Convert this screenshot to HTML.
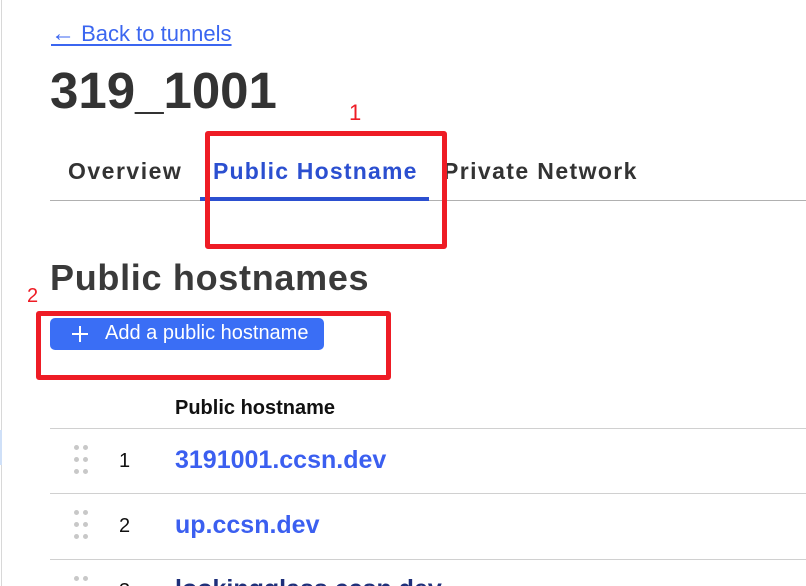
<!DOCTYPE html>
<html><head><meta charset="utf-8"><style>
html,body{margin:0;padding:0;background:#fff;width:806px;height:586px;overflow:hidden;position:relative;font-family:"Liberation Sans",sans-serif;}
.a{position:absolute;white-space:nowrap;}
.line{position:absolute;background:#d0d0d0;height:1px;}
.dots{position:absolute;width:14px;}
.dots i{position:absolute;width:5px;height:5px;border-radius:50%;background:#c8c8c8;}
.red{position:absolute;border:5px solid #ee1c25;border-radius:3px;box-sizing:border-box;}
</style></head><body>
<div style="position:absolute;left:1px;top:0;width:1px;height:586px;background:#d8d8d8"></div>
<div style="position:absolute;left:0;top:430px;width:2px;height:35px;background:#cfe0f8"></div>

<div class="a" style="left:51px;top:20px;font-size:22px;color:#3b66f0;text-decoration:underline;text-underline-offset:3px;"><span style="font-size:24px">←</span> Back to tunnels</div>
<div class="a" style="left:50px;top:61px;font-size:51px;font-weight:bold;color:#333;">319_1001</div>
<div class="a" style="left:349px;top:100px;font-size:22px;color:#ee1c25;">1</div>

<div class="a" style="left:68px;top:158px;font-size:23px;font-weight:bold;color:#333;letter-spacing:1.5px;">Overview</div>
<div class="a" style="left:213px;top:158px;font-size:23px;font-weight:bold;color:#2b4fd0;letter-spacing:1.2px;">Public Hostname</div>
<div class="a" style="left:443px;top:158px;font-size:23px;font-weight:bold;color:#333;letter-spacing:1.4px;">Private Network</div>
<div style="position:absolute;left:50px;top:200px;width:756px;height:1px;background:#b0b0b0"></div>
<div style="position:absolute;left:200px;top:197px;width:229px;height:4px;background:#2b4fd0"></div>
<div class="red" style="left:205px;top:131px;width:242px;height:118px;"></div>

<div class="a" style="left:50px;top:257px;font-size:36px;font-weight:bold;color:#3a3a3a;letter-spacing:0.7px;">Public hostnames</div>
<div class="a" style="left:27px;top:285px;font-size:20px;color:#ee1c25;">2</div>

<div style="position:absolute;left:50px;top:318px;width:274px;height:32px;background:#3a6ef5;border-radius:5px;"></div>
<div style="position:absolute;left:72px;top:333px;width:16px;height:2px;background:#fff"></div>
<div style="position:absolute;left:79px;top:326px;width:2px;height:16px;background:#fff"></div>
<div class="a" style="left:105px;top:322px;font-size:20px;color:#fff;">Add a public hostname</div>
<div class="red" style="left:36px;top:311px;width:355px;height:69px;"></div>

<div class="a" style="left:175px;top:397px;font-size:20px;font-weight:bold;color:#111;">Public hostname</div>
<div class="line" style="left:50px;top:428px;width:756px;"></div>

<div class="dots" style="left:74px;top:445px;height:30px"><i style="left:0;top:0"></i><i style="left:9px;top:0"></i><i style="left:0;top:12px"></i><i style="left:9px;top:12px"></i><i style="left:0;top:24px"></i><i style="left:9px;top:24px"></i></div>
<div class="a" style="left:119px;top:450px;font-size:20px;color:#111;">1</div>
<div class="a" style="left:175px;top:446px;font-size:25px;font-weight:bold;color:#3b5ff0;">3191001.ccsn.dev</div>
<div class="line" style="left:50px;top:493px;width:756px;"></div>

<div class="dots" style="left:74px;top:510px;height:30px"><i style="left:0;top:0"></i><i style="left:9px;top:0"></i><i style="left:0;top:12px"></i><i style="left:9px;top:12px"></i><i style="left:0;top:24px"></i><i style="left:9px;top:24px"></i></div>
<div class="a" style="left:119px;top:515px;font-size:20px;color:#111;">2</div>
<div class="a" style="left:175px;top:511px;font-size:25px;font-weight:bold;color:#3b5ff0;">up.ccsn.dev</div>
<div class="line" style="left:50px;top:559px;width:756px;"></div>

<div class="dots" style="left:74px;top:576px;height:30px"><i style="left:0;top:0"></i><i style="left:9px;top:0"></i><i style="left:0;top:12px"></i><i style="left:9px;top:12px"></i></div>
<div class="a" style="left:119px;top:580px;font-size:20px;color:#111;">3</div>
<div class="a" style="left:175px;top:575px;font-size:25px;font-weight:bold;color:#1e2f7a;">lookingglass.ccsn.dev</div>
</body></html>
